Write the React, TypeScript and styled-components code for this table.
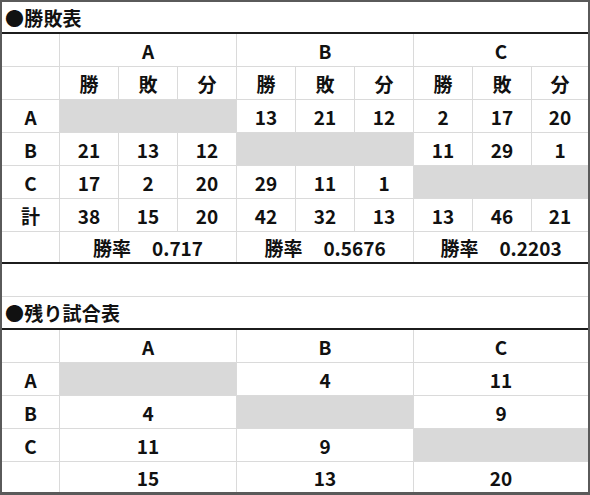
import React from "react";
import styled, { createGlobalStyle } from "styled-components";

const GRID = "#dadada";
const FILL = "#d9d9d9";
const THICK = "#1c1c1c";

const GlobalStyle = createGlobalStyle`
  html, body {
    margin: 0;
    padding: 0;
    background: #ffffff;
  }
  body {
    font-family: "Noto Sans CJK JP", "Noto Sans", sans-serif;
    color: #111111;
  }
`;

const Sheet = styled.div`
  width: 590px;
  height: 495px;
  box-sizing: border-box;
  border: 2px solid #5a5a5a;
  border-bottom-width: 3px;
  background: #ffffff;
  display: flex;
  flex-direction: column;
  overflow: hidden;
`;

const Row = styled.div<{ $h: number; $thick?: boolean; $last?: boolean }>`
  display: grid;
  grid-template-columns: 58px repeat(8, 59px) 56px;
  height: ${(p) => p.$h}px;
  box-sizing: border-box;
  border-bottom: ${(p) =>
    p.$last ? "none" : p.$thick ? `2px solid ${THICK}` : `1px solid ${GRID}`};
`;

const Cell = styled.div<{ $span?: number; $fill?: boolean; $open?: boolean }>`
  grid-column: span ${(p) => p.$span || 1};
  display: flex;
  align-items: center;
  justify-content: center;
  box-sizing: border-box;
  border-right: ${(p) => (p.$open ? "none" : `1px solid ${GRID}`)};
  background: ${(p) => (p.$fill ? FILL : "transparent")};
  font-size: 19px;
  font-weight: 600;
  line-height: 1;
  padding-top: 1px;

  &:last-child {
    border-right: none;
  }
`;

const Title = styled.div`
  grid-column: span 10;
  display: flex;
  align-items: center;
  padding-left: 3px;
  font-size: 19px;
  font-weight: 600;
  line-height: 1;
  letter-spacing: 0.2px;
`;

const Rate = styled.span`
  display: flex;
  align-items: center;
  gap: 21px;
`;

type Rec = [string, string, string];

const teams = ["A", "B", "C"];

const results: (Rec | null)[][] = [
  [null, ["13", "21", "12"], ["2", "17", "20"]],
  [["21", "13", "12"], null, ["11", "29", "1"]],
  [["17", "2", "20"], ["29", "11", "1"], null],
];

const totals: Rec[] = [
  ["38", "15", "20"],
  ["42", "32", "13"],
  ["13", "46", "21"],
];

const rates = ["0.717", "0.5676", "0.2203"];

const remaining = [
  [null, "4", "11"],
  ["4", null, "9"],
  ["11", "9", null],
];

const remainingTotals = ["15", "13", "20"];

export default function App() {
  return (
    <>
      <GlobalStyle />
      <Sheet>
        <Row $h={32} $thick>
          <Title>●勝敗表</Title>
        </Row>
        <Row $h={33}>
          <Cell />
          {teams.map((t) => (
            <Cell key={t} $span={3}>
              {t}
            </Cell>
          ))}
        </Row>
        <Row $h={33}>
          <Cell />
          {teams.map((t) =>
            ["勝", "敗", "分"].map((k) => <Cell key={t + k}>{k}</Cell>)
          )}
        </Row>
        {teams.map((t, i) => (
          <Row key={t} $h={33}>
            <Cell>{t}</Cell>
            {results[i].map((rec, j) =>
              rec ? (
                rec.map((v, k) => <Cell key={`${j}-${k}`}>{v}</Cell>)
              ) : (
                <Cell key={j} $span={3} $fill />
              )
            )}
          </Row>
        ))}
        <Row $h={33}>
          <Cell>計</Cell>
          {totals.map((rec, j) =>
            rec.map((v, k) => <Cell key={`${j}-${k}`}>{v}</Cell>)
          )}
        </Row>
        <Row $h={32} $thick>
          <Cell />
          {rates.map((r) => (
            <Cell key={r} $span={3}>
              <Rate>
                <span>勝率</span>
                <span>{r}</span>
              </Rate>
            </Cell>
          ))}
        </Row>
        <Row $h={33}>
          <Cell $span={10} $open />
        </Row>
        <Row $h={33} $thick>
          <Title>●残り試合表</Title>
        </Row>
        <Row $h={33}>
          <Cell />
          {teams.map((t) => (
            <Cell key={t} $span={3}>
              {t}
            </Cell>
          ))}
        </Row>
        {teams.map((t, i) => (
          <Row key={t} $h={33}>
            <Cell>{t}</Cell>
            {remaining[i].map((v, j) =>
              v ? (
                <Cell key={j} $span={3}>
                  {v}
                </Cell>
              ) : (
                <Cell key={j} $span={3} $fill />
              )
            )}
          </Row>
        ))}
        <Row $h={30} $last>
          <Cell />
          {remainingTotals.map((v, j) => (
            <Cell key={j} $span={3}>
              {v}
            </Cell>
          ))}
        </Row>
      </Sheet>
    </>
  );
}
